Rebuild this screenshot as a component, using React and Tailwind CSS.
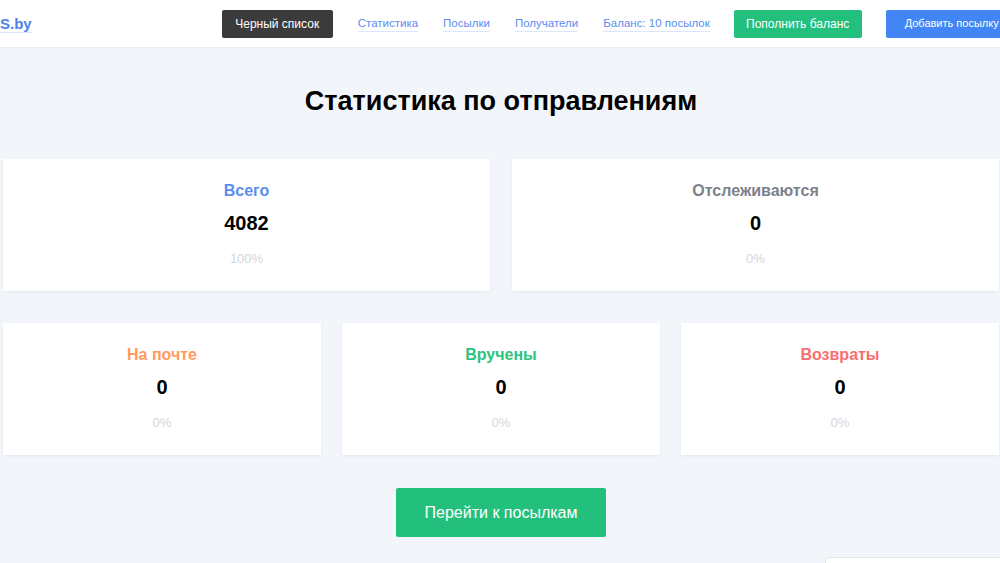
import React from "react";

const links = ["Статистика", "Посылки", "Получатели", "Баланс: 10 посылок"];

const topCards = [
  { title: "Всего", value: "4082", pct: "100%", color: "text-[#5b8def]" },
  { title: "Отслеживаются", value: "0", pct: "0%", color: "text-[#7d8189]" },
];

const bottomCards = [
  { title: "На почте", value: "0", pct: "0%", color: "text-[#ff9b5e]" },
  { title: "Вручены", value: "0", pct: "0%", color: "text-[#2cc47f]" },
  { title: "Возвраты", value: "0", pct: "0%", color: "text-[#f76f6f]" },
];

const StatCard = ({ title, value, pct, color }) => (
  <div className="h-[132px] bg-white shadow-[0_1px_3px_rgba(0,0,0,0.06)] flex flex-col items-center pt-[22px]">
    <div className={"text-[16px] leading-[20px] font-bold " + color}>{title}</div>
    <div className="mt-[10px] text-[20px] leading-[24px] font-bold text-black">{value}</div>
    <div className="mt-[16px] text-[13px] leading-[16px] text-[#d3d6dc]">{pct}</div>
  </div>
);

export default function App() {
  return (
    <div className="relative w-[1000px] h-[563px] overflow-hidden bg-[#f2f6fa] font-['Liberation_Sans',Arial,sans-serif]">
      <header className="h-[47px] bg-white flex items-center shadow-[0_1px_2px_rgba(0,0,0,0.05)] whitespace-nowrap">
        <a className="shrink-0 text-[15px] font-bold text-[#4d82ea] border-b border-[#dbe6fb] leading-[17px]">S.by</a>
        <button className="shrink-0 ml-[190px] w-[111px] h-[28px] rounded-[2px] bg-[#3b3b3b] text-white text-[12px]">
          Черный список
        </button>
        {links.map(l => (
          <a key={l} className="shrink-0 ml-[25px] text-[11.5px] leading-[15px] text-[#5b8def] border-b border-[#dbe6fb]">
            {l}
          </a>
        ))}
        <button className="ml-[24px] w-[128px] h-[28px] rounded-[2px] bg-[#23c07d] text-white text-[12px] shrink-0">
          Пополнить баланс
        </button>
        <button className="ml-[24px] w-[130px] h-[28px] rounded-[2px] bg-[#4285f4] text-white text-[11px] text-left pl-[19px] shrink-0">
          Добавить посылку
        </button>
      </header>

      <main className="pl-[3px] pr-[1px]">
        <h1 className="mt-[38px] text-center text-[27px] leading-[32px] font-bold text-black">
          Статистика по отправлениям
        </h1>
        <div className="mt-[42px] grid grid-cols-2 gap-[22px]">
          {topCards.map(c => <StatCard key={c.title} {...c} />)}
        </div>
        <div className="mt-[32px] grid grid-cols-3 gap-[21px]">
          {bottomCards.map(c => <StatCard key={c.title} {...c} />)}
        </div>
        <div className="mt-[33px] flex justify-center">
          <button className="w-[210px] h-[49px] rounded-[2px] bg-[#23c07d] text-white text-[16px]">
            Перейти к посылкам
          </button>
        </div>
      </main>

      <div className="absolute left-[825px] top-[557px] w-[200px] h-[40px] bg-white rounded-[4px] border border-[#e4e6ea]" />
    </div>
  );
}
